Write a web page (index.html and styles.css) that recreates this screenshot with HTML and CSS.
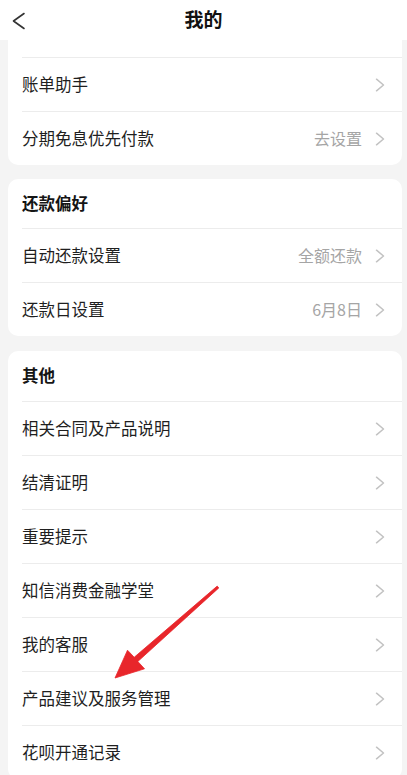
FILE: index.html
```html
<!DOCTYPE html>
<html lang="zh-CN">
<head>
<meta charset="utf-8">
<title>我的</title>
<link rel="stylesheet" href="styles.css">
</head>
<body>
<div class="page">
  <header class="topbar">
    <span class="back">
      <svg width="16" height="18" viewBox="0 0 16 18"><polyline points="13,1.5 2.5,9 13,16.5" fill="none" stroke="#333" stroke-width="1.6" stroke-linecap="round" stroke-linejoin="round"/></svg>
    </span>
    <h1 class="title">我的</h1>
    <span></span>
  </header>

  <section class="card card-first">
    <div class="partial"></div>
    <div class="row"><div class="inner"><span class="label">账单助手</span><span class="right"><svg class="chev" width="10" height="14" viewBox="0 0 10 14"><polyline points="1.5,1.2 8.5,7 1.5,12.8" fill="none" stroke="#c2c2c2" stroke-width="1.5" stroke-linecap="round" stroke-linejoin="round"/></svg></span></div></div>
    <div class="row"><div class="inner"><span class="label">分期免息优先付款</span><span class="right"><span class="value">去设置</span><svg class="chev" width="10" height="14" viewBox="0 0 10 14"><polyline points="1.5,1.2 8.5,7 1.5,12.8" fill="none" stroke="#c2c2c2" stroke-width="1.5" stroke-linecap="round" stroke-linejoin="round"/></svg></span></div></div>
  </section>

  <section class="card card-second">
    <div class="head head-49">还款偏好</div>
    <div class="row"><div class="inner"><span class="label">自动还款设置</span><span class="right"><span class="value">全额还款</span><svg class="chev" width="10" height="14" viewBox="0 0 10 14"><polyline points="1.5,1.2 8.5,7 1.5,12.8" fill="none" stroke="#c2c2c2" stroke-width="1.5" stroke-linecap="round" stroke-linejoin="round"/></svg></span></div></div>
    <div class="row"><div class="inner"><span class="label">还款日设置</span><span class="right"><span class="value">6月8日</span><svg class="chev" width="10" height="14" viewBox="0 0 10 14"><polyline points="1.5,1.2 8.5,7 1.5,12.8" fill="none" stroke="#c2c2c2" stroke-width="1.5" stroke-linecap="round" stroke-linejoin="round"/></svg></span></div></div>
  </section>

  <section class="card card-third">
    <div class="head">其他</div>
    <div class="row"><div class="inner"><span class="label">相关合同及产品说明</span><span class="right"><svg class="chev" width="10" height="14" viewBox="0 0 10 14"><polyline points="1.5,1.2 8.5,7 1.5,12.8" fill="none" stroke="#c2c2c2" stroke-width="1.5" stroke-linecap="round" stroke-linejoin="round"/></svg></span></div></div>
    <div class="row"><div class="inner"><span class="label">结清证明</span><span class="right"><svg class="chev" width="10" height="14" viewBox="0 0 10 14"><polyline points="1.5,1.2 8.5,7 1.5,12.8" fill="none" stroke="#c2c2c2" stroke-width="1.5" stroke-linecap="round" stroke-linejoin="round"/></svg></span></div></div>
    <div class="row"><div class="inner"><span class="label">重要提示</span><span class="right"><svg class="chev" width="10" height="14" viewBox="0 0 10 14"><polyline points="1.5,1.2 8.5,7 1.5,12.8" fill="none" stroke="#c2c2c2" stroke-width="1.5" stroke-linecap="round" stroke-linejoin="round"/></svg></span></div></div>
    <div class="row"><div class="inner"><span class="label">知信消费金融学堂</span><span class="right"><svg class="chev" width="10" height="14" viewBox="0 0 10 14"><polyline points="1.5,1.2 8.5,7 1.5,12.8" fill="none" stroke="#c2c2c2" stroke-width="1.5" stroke-linecap="round" stroke-linejoin="round"/></svg></span></div></div>
    <div class="row"><div class="inner"><span class="label">我的客服</span><span class="right"><svg class="chev" width="10" height="14" viewBox="0 0 10 14"><polyline points="1.5,1.2 8.5,7 1.5,12.8" fill="none" stroke="#c2c2c2" stroke-width="1.5" stroke-linecap="round" stroke-linejoin="round"/></svg></span></div></div>
    <div class="row"><div class="inner"><span class="label">产品建议及服务管理</span><span class="right"><svg class="chev" width="10" height="14" viewBox="0 0 10 14"><polyline points="1.5,1.2 8.5,7 1.5,12.8" fill="none" stroke="#c2c2c2" stroke-width="1.5" stroke-linecap="round" stroke-linejoin="round"/></svg></span></div></div>
    <div class="row"><div class="inner"><span class="label">花呗开通记录</span><span class="right"><svg class="chev" width="10" height="14" viewBox="0 0 10 14"><polyline points="1.5,1.2 8.5,7 1.5,12.8" fill="none" stroke="#c2c2c2" stroke-width="1.5" stroke-linecap="round" stroke-linejoin="round"/></svg></span></div></div>
  </section>

  <svg class="annot" width="407" height="775" viewBox="0 0 407 775">
    <polygon points="217.2,586.1 134.2,657.3 127.5,650.2 115,678 144.5,668.8 137.8,661.5 218.8,587.9" fill="#e8262b" stroke="#e8262b" stroke-width="0.8" stroke-linejoin="round"/>
  </svg>
</div>
</body>
</html>
```

FILE: styles.css
```css
html, body {
  margin: 0;
  padding: 0;
}
body {
  background: #f4f4f4;
  font-family: "Noto Sans CJK SC", "Noto Sans", sans-serif;
  color: #1c1c1c;
}
.page {
  position: relative;
  width: 407px;
  height: 775px;
  overflow: hidden;
}
.topbar {
  height: 40px;
  background: #fff;
  display: grid;
  grid-template-columns: 40px 1fr 40px;
  align-items: center;
}
.back {
  display: flex;
  align-items: center;
  padding-left: 11px;
  height: 40px;
  margin-top: 1px;
}
.title {
  margin: 0;
  text-align: center;
  font-size: 19px;
  font-weight: 700;
  color: #111;
  line-height: 1;
  margin-top: -4px;
}
.card {
  background: #fff;
  margin: 0 5px 0 8px;
  border-radius: 10px;
}
.card-first {
  border-radius: 0 0 10px 10px;
}
.card-second {
  margin-top: 14px;
}
.card-third {
  margin-top: 15px;
}
.partial {
  height: 17px;
}
.head {
  height: 50px;
  display: flex;
  align-items: center;
  padding-left: 14px;
  font-size: 16.5px;
  font-weight: 700;
  color: #151515;
  box-sizing: border-box;
  padding-bottom: 2px;
}
.head-49 {
  height: 49px;
}
.row {
  padding-left: 14px;
}
.inner {
  height: 54px;
  box-sizing: border-box;
  border-top: 1px solid #ececec;
  display: flex;
  align-items: center;
  justify-content: space-between;
  padding-right: 17px;
}
.label {
  font-size: 16.5px;
  color: #1f1f1f;
  line-height: 1;
  margin-top: -1px;
}
.right {
  display: flex;
  align-items: center;
  gap: 13px;
}
.value {
  font-size: 16px;
  color: #a5a5a5;
  line-height: 1;
  margin-top: -1px;
}
.chev {
  display: block;
}
.annot {
  position: absolute;
  left: 0;
  top: 0;
  pointer-events: none;
}
```
